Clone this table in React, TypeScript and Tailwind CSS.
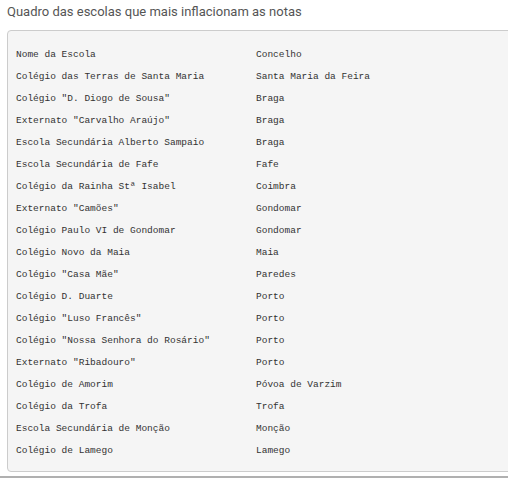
import React from "react";

const rows: [string, string][] = [
  ["Nome da Escola", "Concelho"],
  ["Colégio das Terras de Santa Maria", "Santa Maria da Feira"],
  ["Colégio \"D. Diogo de Sousa\"", "Braga"],
  ["Externato \"Carvalho Araújo\"", "Braga"],
  ["Escola Secundária Alberto Sampaio", "Braga"],
  ["Escola Secundária de Fafe", "Fafe"],
  ["Colégio da Rainha Stª Isabel", "Coimbra"],
  ["Externato \"Camões\"", "Gondomar"],
  ["Colégio Paulo VI de Gondomar", "Gondomar"],
  ["Colégio Novo da Maia", "Maia"],
  ["Colégio \"Casa Mãe\"", "Paredes"],
  ["Colégio D. Duarte", "Porto"],
  ["Colégio \"Luso Francês\"", "Porto"],
  ["Colégio \"Nossa Senhora do Rosário\"", "Porto"],
  ["Externato \"Ribadouro\"", "Porto"],
  ["Colégio de Amorim", "Póvoa de Varzim"],
  ["Colégio da Trofa", "Trofa"],
  ["Escola Secundária de Monção", "Monção"],
  ["Colégio de Lamego", "Lamego"],
];

export default function App() {
  return (
    <div className="w-[508px] h-[478px] overflow-hidden bg-white">
      <div className="border-b-2 border-[#b0b0b0] h-[478px]">
        <h2
          className="pl-[7px] pt-[2px] text-[13px] leading-[20px] text-[#555555]"
          style={{ fontFamily: "Roboto, sans-serif" }}
        >
          Quadro das escolas que mais inflacionam as notas
        </h2>
        <div
          className="ml-[7px] mt-[8px] w-[520px] h-[442px] bg-[#f5f5f5] border border-[#cccccc] rounded-[4px] pl-[8px] pt-[13px] text-[9.5px] text-[#333333]"
          style={{ fontFamily: "'Liberation Mono', 'DejaVu Sans Mono', monospace" }}
        >
          {rows.map(([a, b], i) => (
            <div key={i} className="flex h-[22px] items-center">
              <span className="w-[240px] whitespace-pre">{a}</span>
              <span className="whitespace-pre">{b}</span>
            </div>
          ))}
        </div>
      </div>
    </div>
  );
}
